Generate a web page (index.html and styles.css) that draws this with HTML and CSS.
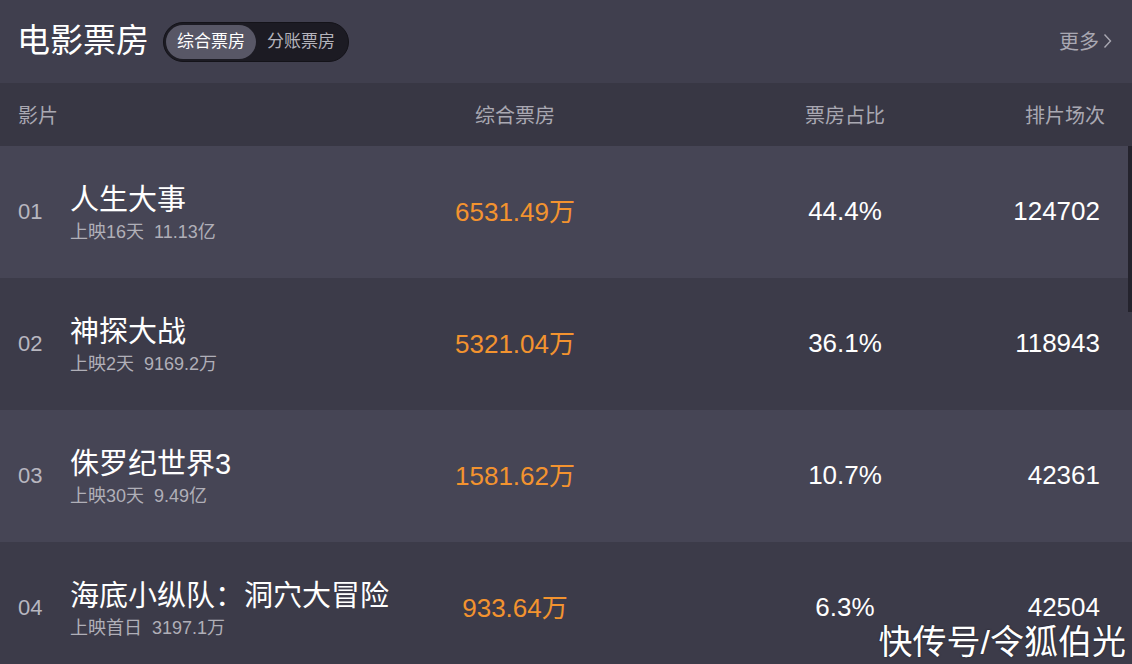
FILE: index.html
```html
<!DOCTYPE html>
<html lang="zh-CN">
<head>
<meta charset="utf-8">
<title>电影票房</title>
<link rel="stylesheet" href="styles.css">
</head>
<body>
<div class="page">
  <header class="top">
    <div class="top-left">
      <h1 class="title">电影票房</h1>
      <div class="toggle">
        <span class="tab active">综合票房</span>
        <span class="tab">分账票房</span>
      </div>
    </div>
    <a class="more">更多<svg class="chev" width="9" height="16" viewBox="0 0 9 16"><path d="M1.5 1.5 L7.5 8 L1.5 14.5" fill="none" stroke="currentColor" stroke-width="1.4"/></svg></a>
  </header>
  <div class="thead">
    <span class="c-film">影片</span>
    <span class="c-box">综合票房</span>
    <span class="c-pct">票房占比</span>
    <span class="c-cnt">排片场次</span>
  </div>
  <div class="rows">
    <div class="row odd">
      <span class="rank">01</span>
      <div class="film"><div class="name">人生大事</div><div class="sub">上映16天&nbsp;&nbsp;11.13亿</div></div>
      <span class="box">6531.49万</span>
      <span class="pct">44.4%</span>
      <span class="cnt">124702</span>
    </div>
    <div class="row even">
      <span class="rank">02</span>
      <div class="film"><div class="name">神探大战</div><div class="sub">上映2天&nbsp;&nbsp;9169.2万</div></div>
      <span class="box">5321.04万</span>
      <span class="pct">36.1%</span>
      <span class="cnt">118943</span>
    </div>
    <div class="row odd">
      <span class="rank">03</span>
      <div class="film"><div class="name">侏罗纪世界3</div><div class="sub">上映30天&nbsp;&nbsp;9.49亿</div></div>
      <span class="box">1581.62万</span>
      <span class="pct">10.7%</span>
      <span class="cnt">42361</span>
    </div>
    <div class="row even">
      <span class="rank">04</span>
      <div class="film"><div class="name">海底小纵队：洞穴大冒险</div><div class="sub">上映首日&nbsp;&nbsp;3197.1万</div></div>
      <span class="box">933.64万</span>
      <span class="pct">6.3%</span>
      <span class="cnt">42504</span>
    </div>
  </div>
  <div class="scroll-thumb"></div>
  <div class="watermark">快传号/令狐伯光</div>
</div>
</body>
</html>
```

FILE: styles.css
```css
* { box-sizing: border-box; }
html, body { margin: 0; padding: 0; }
body {
  width: 1132px;
  height: 664px;
  overflow: hidden;
  background: #3c3b49;
  font-family: "Liberation Sans", "Noto Sans CJK SC", sans-serif;
  color: #fff;
}
.page { position: relative; width: 1132px; height: 664px; overflow: hidden; }

.top {
  height: 83px;
  background: #403f4e;
  display: flex;
  align-items: center;
  justify-content: space-between;
  padding: 0 20px 0 17px;
}
.top-left { display: flex; align-items: center; gap: 14px; }
.title {
  margin: 0;
  font-size: 33px;
  font-weight: normal;
  color: #ffffff;
  line-height: 1;
  padding-bottom: 2px;
}
.toggle {
  display: flex;
  align-items: center;
  height: 40px;
  padding: 2px;
  background: #1c1b23;
  border: 1px solid #141319;
  border-radius: 20px;
}
.tab {
  height: 34px;
  line-height: 34px;
  padding: 0 11px;
  font-size: 17px;
  color: #b4b3bb;
  border-radius: 17px;
}
.tab.active { background: #585766; color: #ffffff; }
.more {
  display: flex;
  align-items: center;
  gap: 4px;
  font-size: 20px;
  color: #a9a8b2;
  padding-bottom: 2px;
}
.chev { display: block; }

.thead {
  height: 63px;
  background: #383744;
  display: grid;
  grid-template-columns: 407px 180px 85px 310px 100px;
  align-items: center;
  padding: 0 27px 0 18px;
  font-size: 20px;
  color: #a9a8b2;
}
.thead .c-box { text-align: center; }
.thead .c-pct { grid-column: 4; text-align: center; }
.thead .c-cnt { text-align: right; margin-right: -5px; }

.row {
  height: 132px;
  display: grid;
  grid-template-columns: 52px 355px 180px 85px 310px 100px;
  align-items: center;
  padding: 0 32px 0 18px;
}
.row.odd { background: #464555; }
.row.even { background: #3c3b49; }
.rank { font-size: 22px; color: #b8b7c0; padding-bottom: 1px; }
.film { display: flex; flex-direction: column; gap: 5px; padding-top: 1px; }
.name { font-size: 29px; line-height: 34px; color: #ffffff; }
.sub { font-size: 18px; line-height: 20px; color: #b0afb8; }
.box { font-size: 26px; color: #f3932f; text-align: center; padding-bottom: 5px; }
.pct { grid-column: 5; font-size: 26px; color: #ffffff; text-align: center; padding-bottom: 2px; }
.cnt { font-size: 26px; color: #ffffff; text-align: right; padding-bottom: 2px; }

.scroll-thumb {
  position: absolute;
  right: 0;
  top: 146px;
  width: 4px;
  height: 166px;
  background: #24232d;
}
.watermark {
  position: absolute;
  right: 6px;
  bottom: 2px;
  font-size: 34px;
  line-height: 40px;
  color: #ffffff;
  text-shadow: 0 0 2px rgba(0,0,0,0.5);
}
```
